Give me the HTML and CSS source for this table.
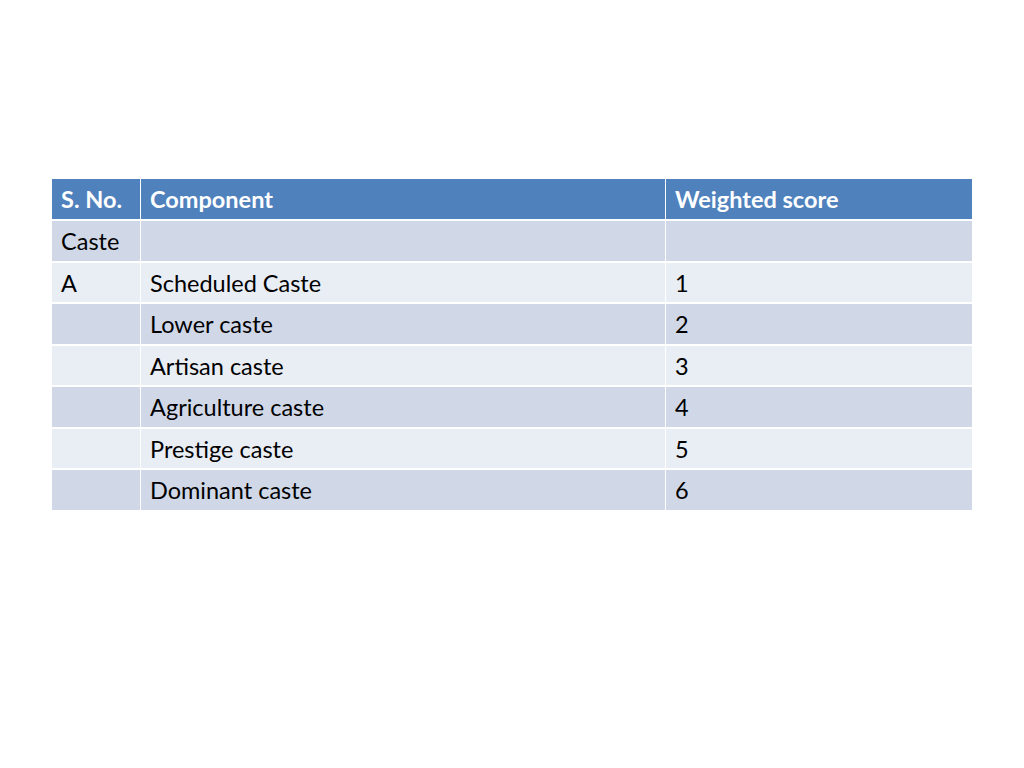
FILE: index.html
```html
<!DOCTYPE html>
<html>
<head>
<meta charset="utf-8">
<link rel="stylesheet" href="styles.css">
</head>
<body>
<table class="score-table">
  <colgroup>
    <col class="c1"><col class="c2"><col class="c3">
  </colgroup>
  <thead>
    <tr><th>S. No.</th><th>Component</th><th>Weighted score</th></tr>
  </thead>
  <tbody>
    <tr class="odd"><td>Caste</td><td></td><td></td></tr>
    <tr class="even"><td>A</td><td>Scheduled Caste</td><td>1</td></tr>
    <tr class="odd"><td></td><td>Lower caste</td><td>2</td></tr>
    <tr class="even"><td></td><td>Artisan caste</td><td>3</td></tr>
    <tr class="odd"><td></td><td>Agriculture caste</td><td>4</td></tr>
    <tr class="even"><td></td><td>Prestige caste</td><td>5</td></tr>
    <tr class="odd"><td></td><td>Dominant caste</td><td>6</td></tr>
  </tbody>
</table>
</body>
</html>
```
FILE: styles.css
```css
html, body {
  margin: 0;
  padding: 0;
  background: #ffffff;
}
body {
  padding: 179px 52px 0 52px;
  font-family: "Lato", "Open Sans", sans-serif;
}
.score-table {
  width: 920px;
  border-collapse: separate;
  border-spacing: 0;
  table-layout: fixed;
  font-size: 23.5px;
  color: #000000;
}
.c1 { width: 89px; }
.c2 { width: 525px; }
.c3 { width: 306px; }
.score-table th,
.score-table td {
  padding: 1px 9px 0 9px;
  height: 40px;
  box-sizing: border-box;
  text-align: left;
  vertical-align: middle;
  border-right: 1px solid #ffffff;
  line-height: 1;
}
.score-table th:last-child,
.score-table td:last-child {
  border-right: none;
}
.score-table th {
  background: #4f81bd;
  color: #ffffff;
  font-weight: bold;
}
.score-table td {
  height: 41.5px;
  padding-top: 2px;
  border-top: 2px solid #ffffff;
}
.odd td { background: #d0d8e8; }
.even td { background: #e9edf4; }
```
